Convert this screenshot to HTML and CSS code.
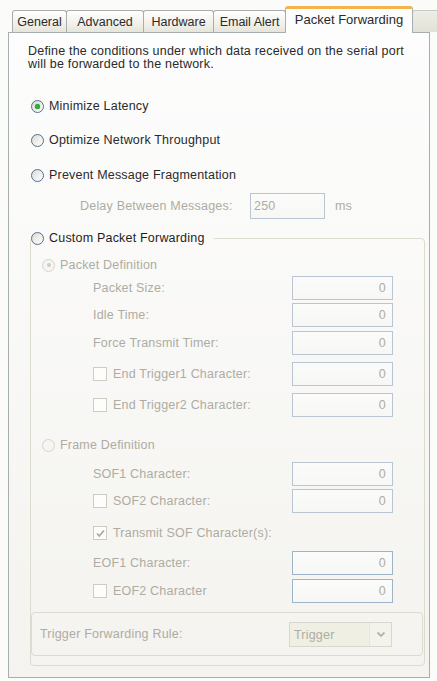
FILE: index.html
```html
<!DOCTYPE html>
<html>
<head>
<meta charset="utf-8">
<link rel="stylesheet" href="styles.css">
</head>
<body>
<div class="tabstrip">
  <div class="tab w-general">General</div>
  <div class="tab w-advanced">Advanced</div>
  <div class="tab w-hardware">Hardware</div>
  <div class="tab w-email">Email Alert</div>
  <div class="tab tab-active w-packet">Packet Forwarding</div>
  <div class="tab w-stub"></div>
</div>
<div class="panel">
  <p class="desc">Define the conditions under which data received on the serial port<br>will be forwarded to the network.</p>

  <div class="opt opt-minimize"><span class="radio radio-on"></span><span>Minimize Latency</span></div>
  <div class="opt opt-optimize"><span class="radio"></span><span>Optimize Network Throughput</span></div>
  <div class="opt opt-prevent"><span class="radio"></span><span>Prevent Message Fragmentation</span></div>

  <div class="delay-row">
    <span class="delay-label dis">Delay Between Messages:</span>
    <span class="box box-left dis">250</span>
    <span class="ms dis">ms</span>
  </div>

  <fieldset class="custom">
    <legend class="opt custom-legend"><span class="radio"></span><span>Custom Packet Forwarding</span></legend>

    <div class="sub sub-packet"><span class="radio radio-dis radio-dis-on"></span><span class="dis">Packet Definition</span></div>

    <div class="field f-ps"><span class="flabel dis">Packet Size:</span><span class="box dis">0</span></div>
    <div class="field f-idle"><span class="flabel dis">Idle Time:</span><span class="box dis">0</span></div>
    <div class="field f-force"><span class="flabel dis">Force Transmit Timer:</span><span class="box dis">0</span></div>
    <div class="field f-et1"><span class="flabel dis"><span class="chk"></span>End Trigger1 Character:</span><span class="box dis">0</span></div>
    <div class="field f-et2"><span class="flabel dis"><span class="chk"></span>End Trigger2 Character:</span><span class="box dis">0</span></div>

    <div class="sub sub-frame"><span class="radio radio-dis"></span><span class="dis">Frame Definition</span></div>

    <div class="field f-sof1"><span class="flabel dis">SOF1 Character:</span><span class="box dis">0</span></div>
    <div class="field f-sof2"><span class="flabel dis"><span class="chk"></span>SOF2 Character:</span><span class="box dis">0</span></div>
    <div class="field f-tsof"><span class="flabel dis"><span class="chk chk-on"><svg width="11" height="11" viewBox="0 0 11 11"><path d="M2 5.5 L4.3 8 L9 2.5" fill="none" stroke="#a9a79a" stroke-width="1.6"/></svg></span>Transmit SOF Character(s):</span></div>
    <div class="field f-eof1"><span class="flabel dis">EOF1 Character:</span><span class="box box-blue dis">0</span></div>
    <div class="field f-eof2"><span class="flabel dis"><span class="chk"></span>EOF2 Character</span><span class="box box-blue dis">0</span></div>

    <div class="trigger">
      <span class="dis">Trigger Forwarding Rule:</span>
      <span class="select">
        <span class="select-text dis">Trigger</span>
        <span class="select-btn"><svg width="10" height="7" viewBox="0 0 10 7"><path d="M1.5 1.5 L5 5 L8.5 1.5" fill="none" stroke="#b4b4a8" stroke-width="1.8"/></svg></span>
      </span>
    </div>
  </fieldset>
</div>
</body>
</html>
```

FILE: styles.css
```css
* { box-sizing: border-box; }
html, body { margin: 0; padding: 0; }
body {
  width: 437px;
  height: 681px;
  overflow: hidden;
  background: #fbfbfa;
  font-family: "Liberation Sans", Arial, sans-serif;
  font-size: 12.5px;
  letter-spacing: 0.2px;
  color: #2a2a2a;
}

.tabstrip {
  display: flex;
  align-items: flex-end;
  height: 32px;
  padding-left: 12px;
  letter-spacing: 0;
}
.tab {
  flex: none;
  height: 22px;
  display: flex;
  align-items: center;
  justify-content: center;
  border: 1px solid #a7aeaf;
  border-bottom: none;
  border-radius: 3px 3px 0 0;
  background: linear-gradient(#ffffff, #f1f0ea 60%, #e6e5dc);
  color: #2b2b2b;
  margin-right: -1px;
  white-space: nowrap;
}
.w-general { width: 55px; }
.w-advanced { width: 78px; }
.w-hardware { width: 71px; }
.w-email { width: 73px; }
.w-packet { width: 128px; }
.w-stub { width: 30px; background: linear-gradient(#eeeee6, #e2e1d6); border-color: #c9cbc2; }
.tab-active {
  position: relative;
  z-index: 1;
  height: 27px;
  margin-bottom: -1px;
  background: #fdfdfd;
  border-top: 3px solid #f3b54a;
  padding-bottom: 3px;
  font-size: 13px;
}

.panel {
  margin-left: 8px;
  width: 422px;
  height: 646px;
  border: 1px solid #a7aeaf;
  background: linear-gradient(#fdfdfd, #f4f3ef);
  padding-left: 19px;
  padding-top: 13px;
}

.desc {
  margin: 0;
  line-height: 13px;
  margin-top: -1px;
  color: #2a2a2a;
}

.opt {
  display: flex;
  align-items: center;
  gap: 5px;
  height: 20px;
  margin-left: 3px;
}
.opt-minimize { margin-top: 25px; }
.opt-optimize { margin-top: 14px; }
.opt-prevent { margin-top: 15px; }

.radio {
  flex: none;
  width: 13px;
  height: 13px;
  border-radius: 50%;
  border: 1px solid #4f6f94;
  background: linear-gradient(135deg, #dcdcd4, #ffffff);
  display: grid;
  place-items: center;
}
.radio-on::after {
  content: "";
  width: 5px;
  height: 5px;
  border-radius: 50%;
  background: #2fae3a;
  box-shadow: 0 0 1px #1f8a2a;
}
.radio-dis {
  border-color: #d6d4c9;
  background: #f6f5f1;
}
.radio-dis-on::after {
  content: "";
  width: 4px;
  height: 4px;
  border-radius: 50%;
  background: #cfcdc2;
}

.dis { color: #aeaca2; }

.delay-row {
  display: flex;
  align-items: center;
  height: 26px;
  margin-top: 8px;
  margin-left: 52px;
}
.delay-label { width: 170px; }
.ms { margin-left: 10px; }

.box {
  flex: none;
  width: 101px;
  height: 24px;
  border: 1px solid #b9c6d1;
  background: linear-gradient(#fbfbfb, #f7f7f5);
  display: flex;
  align-items: center;
  justify-content: flex-end;
  padding-right: 6px;
}
.delay-row .box { height: 26px; }
.box-left {
  width: 75px;
  justify-content: flex-start;
  padding-left: 3px;
}
.box-blue { border-color: #9fb4c8; }

.custom {
  margin: 9px 4px 0 2px;
  padding: 0 0 9px 0;
  border: 1px solid #dcdbd0;
  border-radius: 4px;
  min-width: 0;
}
.custom-legend {
  padding: 0 9px 0 0;
  margin-left: 0;
  color: #1e1e1e;
}

.sub {
  display: flex;
  align-items: center;
  gap: 5px;
  height: 20px;
  margin-left: 11px;
}
.sub-packet { margin-top: 7px; }
.sub-frame { margin-top: 18px; }

.field {
  display: flex;
  align-items: center;
  height: 24px;
  margin-left: 62px;
  margin-right: 31px;
}
.flabel {
  display: flex;
  align-items: center;
  gap: 6px;
  margin-right: auto;
}
.f-ps { margin-top: 1px; }
.f-idle { margin-top: 3px; }
.f-force { margin-top: 4px; }
.f-et1 { margin-top: 7px; }
.f-et2 { margin-top: 7px; }
.f-sof1 { margin-top: 7px; }
.f-sof2 { margin-top: 3px; }
.f-tsof { margin-top: 9px; height: 22px; }
.f-eof1 { margin-top: 7px; }
.f-eof2 { margin-top: 4px; }

.chk {
  flex: none;
  width: 14px;
  height: 14px;
  border: 1px solid #cfcdc1;
  background: #fdfdfc;
  display: grid;
  place-items: center;
}

.trigger {
  display: flex;
  align-items: center;
  justify-content: space-between;
  height: 44px;
  margin: 9px 1px 0 0;
  padding: 0 30px 0 8px;
  border: 1px solid #dcdbd0;
  border-radius: 4px;
}
.select {
  display: flex;
  width: 103px;
  height: 25px;
  border: 1px solid #d8d8ce;
  background: #efefe4;
  margin-top: 1px;
}
.select-text {
  flex: 1;
  display: flex;
  align-items: center;
  padding-left: 4px;
}
.select-btn {
  width: 22px;
  display: grid;
  place-items: center;
  background: #f3f3ec;
  border-left: 1px solid #e6e6dc;
}
```
